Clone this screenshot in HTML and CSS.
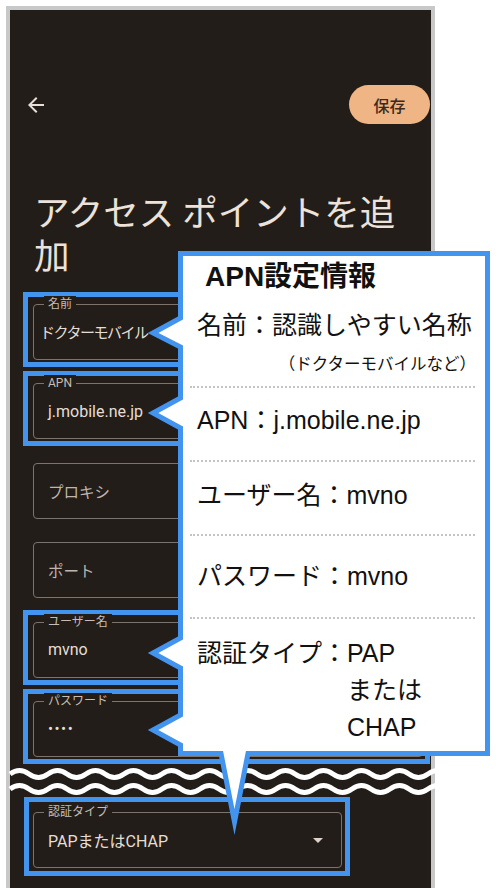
FILE: index.html
```html
<!DOCTYPE html>
<html lang="ja">
<head>
    <meta charset="UTF-8">
    <title>APN設定</title>
    <link rel="stylesheet" href="styles.css">
</head>
<body>
<div class="page">
    <div class="phone">
        <div class="appbar">
            <svg class="back" viewBox="0 0 24 24"><path d="M20 11H7.83l5.59-5.59L12 4l-8 8 8 8 1.41-1.41L7.83 13H20v-2z"/></svg>
            <button class="save">保存</button>
        </div>
        <h1 class="title">アクセス ポイントを追加</h1>
        <div class="fields">
            <div class="field marked"><span class="label">名前</span><span class="value name">ドクターモバイル</span></div>
            <div class="field marked"><span class="label">APN</span><span class="value">j.mobile.ne.jp</span></div>
            <div class="field"><span class="value hint">プロキシ</span></div>
            <div class="field"><span class="value hint">ポート</span></div>
            <div class="field marked"><span class="label">ユーザー名</span><span class="value">mvno</span></div>
            <div class="field marked"><span class="label">パスワード</span><span class="value dots">••••</span></div>
        </div>
        <div class="cut">
            <svg width="423" height="55" viewBox="0 0 423 55">
                <path d="M0 17 q9.5 -7 19 0 t19 0 t19 0 t19 0 t19 0 t19 0 t19 0 t19 0 t19 0 t19 0 t19 0 t19 0 t19 0 t19 0 t19 0 t19 0 t19 0 t19 0 t19 0 t19 0 t19 0 t19 0 t19 0"/>
                <path d="M0 32 q9.5 -7 19 0 t19 0 t19 0 t19 0 t19 0 t19 0 t19 0 t19 0 t19 0 t19 0 t19 0 t19 0 t19 0 t19 0 t19 0 t19 0 t19 0 t19 0 t19 0 t19 0 t19 0 t19 0 t19 0"/>
            </svg>
        </div>
        <div class="field select marked"><span class="label">認証タイプ</span><span class="value">PAPまたはCHAP</span><span class="caret"></span></div>
    </div>

    <svg class="bubble" width="498" height="888" viewBox="0 0 498 888">
        <path d="M180.5 253.5 H487.5 V753.5 H248 L234.5 822 L221 753.5 H180.5 V745 L153 730 L180.5 715 V668 L153 653 L180.5 638 V428 L153 413 L180.5 398 V347 L153 333 L180.5 318 Z"/>
    </svg>
    <div class="note">
        <div class="note-head">APN設定情報</div>
        <div class="note-row first">名前：認識しやすい名称</div>
        <div class="note-sub">（ドクターモバイルなど）</div>
        <div class="note-sep s1"></div>
        <div class="note-row r-apn">APN：j.mobile.ne.jp</div>
        <div class="note-sep s2"></div>
        <div class="note-row r-user">ユーザー名：mvno</div>
        <div class="note-sep s3"></div>
        <div class="note-row r-pass">パスワード：mvno</div>
        <div class="note-sep s4"></div>
        <div class="note-auth"><span>認証タイプ：</span><span>PAP<br>または<br>CHAP</span></div>
    </div>
</div>
</body>
</html>
```

FILE: styles.css
```css
*{
    box-sizing: border-box;
    margin: 0;
    padding: 0;
}
body{
    background: #fff;
    font-family: Roboto, "Noto Sans CJK JP", sans-serif;
}
.page{
    position: relative;
    width: 498px;
    height: 888px;
    overflow: hidden;
}
.phone{
    margin: 6px 0 0 6px;
    width: 429px;
    height: 882px;
    border: 4px solid #c8c8c8;
    border-bottom: none;
    background: #221d19;
    color: #e6ddd5;
}
.appbar{
    display: flex;
    align-items: center;
    justify-content: space-between;
    padding: 75px 1px 0 14px;
}
.back{
    width: 24px;
    height: 24px;
    fill: #e8dfd8;
}
.save{
    width: 81px;
    height: 39px;
    border: none;
    border-radius: 20px;
    background: #f0b585;
    color: #3b2a1d;
    font-family: Roboto, "Noto Sans CJK JP", sans-serif;
    font-size: 16px;
    font-weight: 500;
}
.title{
    margin-top: 65px;
    padding-left: 24px;
    max-width: 409px;
    font-family: "Noto Sans CJK JP", sans-serif;
    font-size: 35.5px;
    font-weight: 400;
    line-height: 43px;
    color: #ede2d9;
}
.fields{
    display: flex;
    flex-direction: column;
    gap: 23.6px;
    margin: 28.5px 0 0 23px;
    width: 390px;
}
.field{
    position: relative;
    display: flex;
    align-items: center;
    height: 56px;
    padding: 0 18px 0 14px;
    border: 1px solid #7d736b;
    border-radius: 4px;
}
.label{
    position: absolute;
    top: -9px;
    left: 10px;
    padding: 0 4px;
    background: #221d19;
    color: #c8bdb4;
    font-size: 12px;
    line-height: 16px;
}
.value{
    font-size: 16px;
    color: #e6ddd5;
}
.value.name{
    margin-left: -8px;
    font-size: 15px;
    letter-spacing: -1.5px;
}
.value.hint{
    font-size: 15.5px;
    color: #bfb5ac;
}
.value.dots{
    font-size: 15px;
    letter-spacing: 1.5px;
}
.marked::before{
    content: '';
    position: absolute;
    top: -13px;
    left: -11px;
    right: -8px;
    bottom: -8px;
    border: 5px solid #4394ef;
}
.cut{
    height: 55px;
}
.cut svg{
    display: block;
    overflow: visible;
}
.cut path{
    fill: none;
    stroke: #fff;
    stroke-width: 5;
}
.select{
    margin-left: 23px;
    width: 309px;
}
.select.marked::before{
    top: -16px;
    left: -10px;
    right: -9px;
    bottom: -9px;
}
.caret{
    margin-left: auto;
    border-left: 5px solid transparent;
    border-right: 5px solid transparent;
    border-top: 5px solid #ddd3cb;
}

/* callout */
.bubble{
    position: absolute;
    top: 0;
    left: 0;
    z-index: 2;
}
.bubble path{
    fill: #fff;
    stroke: #4394ef;
    stroke-width: 5;
    stroke-miterlimit: 10;
}
.note{
    position: absolute;
    top: 255px;
    left: 183px;
    width: 304px;
    z-index: 3;
    padding-left: 14px;
    color: #111;
    font-family: "Liberation Sans", "Noto Sans CJK JP", sans-serif;
}
.note-head{
    height: 44px;
    padding-left: 8px;
    font-size: 28px;
    font-weight: 700;
    line-height: 44px;
}
.note-row{
    height: 30px;
    font-size: 25px;
    line-height: 30px;
    white-space: nowrap;
}
.note-row.first{ margin-top: 11px; }
.note-row.r-apn{ margin-top: 17px; }
.note-row.r-user{ margin-top: 18px; }
.note-row.r-pass{ margin-top: 25px; }
.note-sub{
    height: 20px;
    margin-top: 14px;
    padding-right: 11px;
    text-align: right;
    font-size: 16.5px;
    line-height: 20px;
}
.note-sep{
    margin: 0 12px 0 -7px;
    border-top: 2px dotted #c4c4c4;
}
.note-sep.s1{ margin-top: 12px; }
.note-sep.s2{ margin-top: 25px; }
.note-sep.s3{ margin-top: 24px; }
.note-sep.s4{ margin-top: 26px; }
.note-auth{
    display: flex;
    margin-top: 15.5px;
    font-size: 25px;
    line-height: 37px;
}
```
